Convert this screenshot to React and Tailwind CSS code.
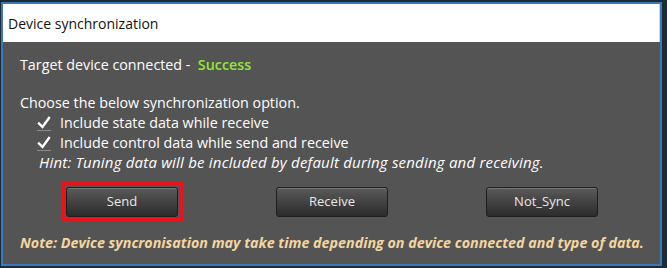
import React from 'react';

const font = { fontFamily: '"Open Sans", "Noto Sans", sans-serif' };

const Check = () => (
  <svg width="16" height="16" viewBox="0 0 16 16" className="shrink-0">
    <path d="M3 8.5 L6.5 12 L13 3" fill="none" stroke="#ffffff" strokeWidth="2.4" strokeLinecap="square" />
    <line x1="1" y1="15.5" x2="15" y2="15.5" stroke="#8a8a8a" strokeWidth="1" />
  </svg>
);

const Button = ({ children }) => (
  <button className="w-[112px] h-[30px] rounded-[3px] border border-[#1e1e1e] bg-gradient-to-b from-[#5a5a5a] to-[#2c2c2c] text-[13px] text-[#e8e8e8] shadow-[inset_0_1px_0_#777]">
    {children}
  </button>
);

export default function App() {
  return (
    <div className="w-[667px] h-[268px] bg-[#1b2b3b] pt-[2px] pl-[1px] pr-[5px] pb-[2px]" style={font}>
      <div className="h-full border-[2px] border-[#3c78b3] bg-[#545454] flex flex-col">
        <div className="h-[38px] bg-white border-r border-[#d4d4d4] flex items-center pl-[5px] text-[14px] text-[#111]">
          Device synchronization
        </div>
        <div className="flex-1 flex flex-col pl-[17px] text-[14.3px] text-white">
          <div className="mt-[13px] h-[20px] flex items-center">
            Target device connected -&nbsp;&nbsp;<span className="text-[#93e63a] font-semibold">Success</span>
          </div>
          <div className="mt-[18px] h-[20px] flex items-center">Choose the below synchronization option.</div>
          <div className="h-[20px] flex items-center gap-[8px] pl-[16px]">
            <Check />
            <span>Include state data while receive</span>
          </div>
          <div className="h-[20px] flex items-center gap-[8px] pl-[16px]">
            <Check />
            <span>Include control data while send and receive</span>
          </div>
          <div className="h-[18px] flex items-center pl-[19px] italic text-[15px] tracking-[0.2px]">
            Hint: Tuning data will be included by default during sending and receiving.
          </div>
          <div className="mt-[11px] flex items-center">
            <div className="ml-[41px] border-[4px] border-[#e8141c] p-[1px]">
              <Button>Send</Button>
            </div>
            <div className="ml-[93px]">
              <Button>Receive</Button>
            </div>
            <div className="ml-[98px]">
              <Button>Not_Sync</Button>
            </div>
          </div>
          <div className="mt-[10px] h-[22px] flex items-center italic font-bold text-[14.3px] text-[#f3d6a0]">
            Note: Device syncronisation may take time depending on device connected and type of data.
          </div>
        </div>
      </div>
    </div>
  );
}
